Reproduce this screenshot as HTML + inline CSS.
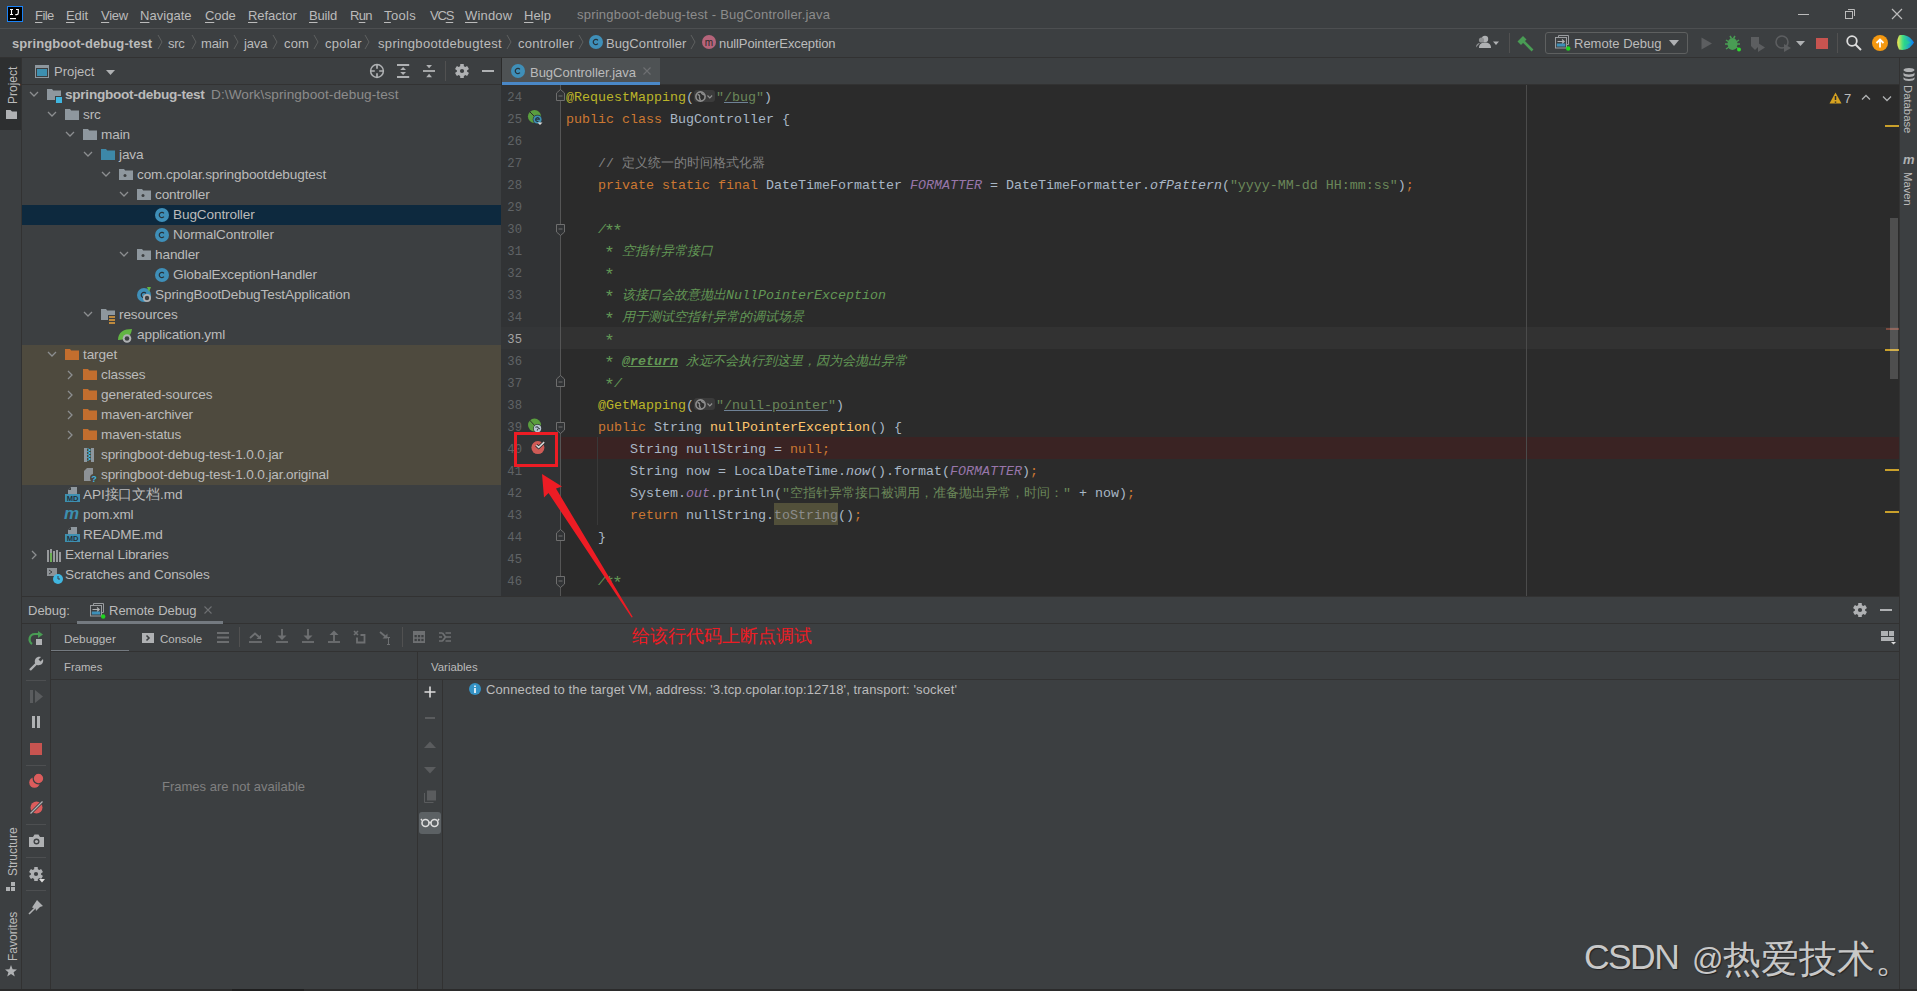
<!DOCTYPE html><html><head><meta charset="utf-8"><title>IntelliJ</title><style>
*{margin:0;padding:0;box-sizing:border-box}
html,body{width:1917px;height:991px;overflow:hidden;background:#3c3f41}
body{position:relative;font-family:"Liberation Sans",sans-serif;font-size:13px;color:#bbbbbb}
.t{position:absolute;white-space:pre;line-height:16px;transform:translateY(-7px)}
.c{position:absolute;white-space:pre;font-family:"Liberation Mono",monospace;font-size:13.333px;line-height:22px;color:#a9b7c6}
.k{color:#cc7832}.an{color:#bbb529}.s{color:#6a8759}.cm{color:#808080}.dc{color:#629755;font-style:italic}
.sf{color:#9876aa;font-style:italic}.it{font-style:italic}.md{color:#ffc66d}
.zh{font-size:13px}
.ast{display:inline-block;width:8px;text-align:center;font-style:normal;transform:translate(-0.5px,2.5px) scale(1.3)}
.ln{position:absolute;left:502px;width:20px;text-align:right;font-family:"Liberation Mono",monospace;font-size:12.2px;line-height:22px;color:#606366}
svg{position:absolute;overflow:visible}
</style></head><body><div style="position:absolute;left:0px;top:0px;width:1917px;height:28px;background:#3c3f41"></div><div style="position:absolute;left:0px;top:28px;width:1917px;height:1px;background:#4d4f51"></div><svg style="left:7px;top:6px" width="16" height="16"><rect x="0.5" y="0.5" width="15" height="15" fill="#000" stroke="#1a82f7"/><path d="M3 3.5h3M4.5 3.5v5M3 8.5h3" stroke="#fff" stroke-width="1.1"/><path d="M9 3.5h2.3v3.3c0 1.3-0.6 1.9-1.7 1.9H8.3" fill="none" stroke="#fff" stroke-width="1.2"/><rect x="3" y="12" width="6" height="1.2" fill="#fff"/></svg><div class="t" style="left:35px;top:15px;color:#bbbbbb;letter-spacing:-0.537px;"><span style="text-decoration:underline;text-underline-offset:2px">F</span>ile</div><div class="t" style="left:66px;top:15px;color:#bbbbbb;letter-spacing:-0.100px;"><span style="text-decoration:underline;text-underline-offset:2px">E</span>dit</div><div class="t" style="left:101px;top:15px;color:#bbbbbb;letter-spacing:-0.261px;"><span style="text-decoration:underline;text-underline-offset:2px">V</span>iew</div><div class="t" style="left:140px;top:15px;color:#bbbbbb;letter-spacing:0.036px;"><span style="text-decoration:underline;text-underline-offset:2px">N</span>avigate</div><div class="t" style="left:205px;top:15px;color:#bbbbbb;letter-spacing:-0.095px;"><span style="text-decoration:underline;text-underline-offset:2px">C</span>ode</div><div class="t" style="left:248px;top:15px;color:#bbbbbb;letter-spacing:-0.041px;"><span style="text-decoration:underline;text-underline-offset:2px">R</span>efactor</div><div class="t" style="left:309px;top:15px;color:#bbbbbb;letter-spacing:-0.142px;"><span style="text-decoration:underline;text-underline-offset:2px">B</span>uild</div><div class="t" style="left:350px;top:15px;color:#bbbbbb;letter-spacing:-0.650px;">R<span style="text-decoration:underline;text-underline-offset:2px">u</span>n</div><div class="t" style="left:384px;top:15px;color:#bbbbbb;letter-spacing:0.370px;"><span style="text-decoration:underline;text-underline-offset:2px">T</span>ools</div><div class="t" style="left:430px;top:15px;color:#bbbbbb;letter-spacing:-1.177px;">VC<span style="text-decoration:underline;text-underline-offset:2px">S</span></div><div class="t" style="left:465px;top:15px;color:#bbbbbb;letter-spacing:0.160px;"><span style="text-decoration:underline;text-underline-offset:2px">W</span>indow</div><div class="t" style="left:524px;top:15px;color:#bbbbbb;letter-spacing:0.041px;"><span style="text-decoration:underline;text-underline-offset:2px">H</span>elp</div><div class="t" style="left:577px;top:14px;color:#8c8c8c;letter-spacing:0.213px;">springboot-debug-test - BugController.java</div><div style="position:absolute;left:1798px;top:14px;width:11px;height:1px;background:#bbb"></div><svg style="left:1845px;top:8px" width="12" height="12"><rect x="0.5" y="3.5" width="7" height="7" fill="none" stroke="#bbb"/><path d="M3 1.5h6.5V8" fill="none" stroke="#bbb"/></svg><svg style="left:1891px;top:8px" width="12" height="12"><path d="M1 1L11 11M11 1L1 11" stroke="#bbb" stroke-width="1.2"/></svg><div style="position:absolute;left:0px;top:29px;width:1917px;height:28px;background:#3c3f41"></div><div style="position:absolute;left:0px;top:57px;width:1917px;height:1px;background:#323232"></div><div class="t" style="left:12px;top:43px;font-weight:bold;letter-spacing:0.074px;">springboot-debug-test</div><div class="t" style="left:168px;top:43px;letter-spacing:-0.243px;">src</div><div class="t" style="left:201px;top:43px;letter-spacing:-0.170px;">main</div><div class="t" style="left:244px;top:43px;letter-spacing:-0.162px;">java</div><div class="t" style="left:284px;top:43px;letter-spacing:0.147px;">com</div><div class="t" style="left:325px;top:43px;letter-spacing:0.249px;">cpolar</div><div class="t" style="left:378px;top:43px;letter-spacing:0.325px;">springbootdebugtest</div><div class="t" style="left:518px;top:43px;letter-spacing:0.253px;">controller</div><svg style="left:157px;top:34px" width="6" height="16"><path d="M1 1L5 8L1 15" fill="none" stroke="#5e6060" stroke-width="1"/></svg><svg style="left:191px;top:34px" width="6" height="16"><path d="M1 1L5 8L1 15" fill="none" stroke="#5e6060" stroke-width="1"/></svg><svg style="left:233px;top:34px" width="6" height="16"><path d="M1 1L5 8L1 15" fill="none" stroke="#5e6060" stroke-width="1"/></svg><svg style="left:272px;top:34px" width="6" height="16"><path d="M1 1L5 8L1 15" fill="none" stroke="#5e6060" stroke-width="1"/></svg><svg style="left:313px;top:34px" width="6" height="16"><path d="M1 1L5 8L1 15" fill="none" stroke="#5e6060" stroke-width="1"/></svg><svg style="left:364px;top:34px" width="6" height="16"><path d="M1 1L5 8L1 15" fill="none" stroke="#5e6060" stroke-width="1"/></svg><svg style="left:506px;top:34px" width="6" height="16"><path d="M1 1L5 8L1 15" fill="none" stroke="#5e6060" stroke-width="1"/></svg><svg style="left:578px;top:34px" width="6" height="16"><path d="M1 1L5 8L1 15" fill="none" stroke="#5e6060" stroke-width="1"/></svg><svg style="left:690px;top:34px" width="6" height="16"><path d="M1 1L5 8L1 15" fill="none" stroke="#5e6060" stroke-width="1"/></svg><svg style="left:588.5px;top:35px" width="14" height="14"><circle cx="7" cy="7" r="7" fill="#3f8fb8"/><path d="M8.9 5.4A2.6 2.6 0 1 0 8.9 8.6" fill="none" stroke="#26323a" stroke-width="1.2"/></svg><div class="t" style="left:606px;top:43px;letter-spacing:0.078px;">BugController</div><svg style="left:701.5px;top:35px" width="14" height="14"><circle cx="7" cy="7" r="7" fill="#b5647a"/><text x="7" y="10.5" text-anchor="middle" font-family="Liberation Sans" font-size="10" fill="#2b2b2b">m</text></svg><div class="t" style="left:719px;top:43px;letter-spacing:-0.101px;">nullPointerException</div><svg style="left:1476px;top:35px" width="24" height="14"><circle cx="9" cy="4" r="3.2" fill="#afb1b3"/><path d="M3 13c0-4 2.5-5.5 6-5.5s6 1.5 6 5.5z" fill="#afb1b3"/><circle cx="5.5" cy="5" r="2.6" fill="#8f9193"/><path d="M0 12.5c0-3 1.5-4.5 4-4.5" fill="#8f9193"/><path d="M17 6.5h6l-3 3.5z" fill="#afb1b3"/></svg><div style="position:absolute;left:1509px;top:33px;width:1px;height:20px;background:#515151"></div><svg style="left:1516px;top:35px" width="19" height="17"><path d="M1.5 6.5L7 1L10.5 4.5L5 10z" fill="#499c54"/><path d="M7.5 6.5L16.5 15.5" stroke="#499c54" stroke-width="2.6"/></svg><div style="position:absolute;left:1545px;top:32px;width:143px;height:22px;border:1px solid #5e6060;border-radius:3px;background:#3c3f41"></div><svg style="left:1555px;top:35px" width="17" height="17"><path d="M3.5 2.5V0.5h10v9h-2" fill="none" stroke="#9a9da0"/><rect x="0.5" y="2.5" width="11" height="10.5" fill="#3c3f41" stroke="#9a9da0"/><path d="M2.5 6.5h6.5M7 4.5l2.2 2-2.2 2" fill="none" stroke="#afb1b3" stroke-width="1.1"/><rect x="1.8" y="8.5" width="8.5" height="3" fill="#3d8fb8"/><circle cx="13.2" cy="13.5" r="2.2" fill="#1fd31f"/></svg><div class="t" style="left:1574px;top:43px;color:#bbbbbb">Remote Debug</div><svg style="left:1669px;top:40px" width="10" height="6"><path d="M0 0h10L5 6z" fill="#afb1b3"/></svg><svg style="left:1701px;top:37px" width="12" height="13"><path d="M0.5 0.5L11 6.5L0.5 12.5z" fill="#5c5e60"/></svg><svg style="left:1725px;top:35px" width="17" height="17"><ellipse cx="7.5" cy="9" rx="5" ry="6" fill="#499c54"/><path d="M1 5l3 2M14 5l-3 2M0 9h3M12 9h3M1 14l3-2M14 14l-3-2M5 1l1.5 2.5M10 1l-1.5 2.5" stroke="#499c54" stroke-width="1.5"/><circle cx="14" cy="14.5" r="2" fill="#2fd92f"/></svg><svg style="left:1750px;top:35px" width="17" height="17"><path d="M1 2h8v9l-4 4-4-4z" fill="#5c5e60"/><path d="M8 8l7 4.5-7 4.5z" fill="#5c5e60"/></svg><svg style="left:1775px;top:35px" width="17" height="17"><circle cx="7" cy="7" r="6" fill="none" stroke="#5c5e60" stroke-width="1.6"/><path d="M9 9l7 4-7 4z" fill="#5c5e60"/></svg><svg style="left:1796px;top:41px" width="9" height="5"><path d="M0 0h9L4.5 5z" fill="#afb1b3"/></svg><div style="position:absolute;left:1816px;top:38px;width:12px;height:11px;background:#c75450"></div><div style="position:absolute;left:1837px;top:33px;width:1px;height:20px;background:#515151"></div><svg style="left:1846px;top:35px" width="16" height="16"><circle cx="6" cy="6" r="4.8" fill="none" stroke="#dddddd" stroke-width="1.8"/><path d="M9.5 9.5L15 15" stroke="#dddddd" stroke-width="2"/></svg><svg style="left:1872px;top:35px" width="17" height="17"><circle cx="8" cy="8" r="8" fill="#f49810"/><path d="M8 12.5V5M4.5 8L8 4.5L11.5 8" fill="none" stroke="#fff" stroke-width="1.8"/></svg><svg style="left:1897px;top:34px" width="18" height="18"><defs><linearGradient id="tb" x1="0" y1="0" x2="1" y2="0"><stop offset="0" stop-color="#fce94f"/><stop offset="0.35" stop-color="#3ddc84"/><stop offset="1" stop-color="#087cfa"/></linearGradient></defs><path d="M2 1.5C7 0 13 2 17 8.5C13 15 7 17 2 15.5C-0.5 11 -0.5 6 2 1.5z" fill="url(#tb)"/><path d="M7 5L14 8.5L7 12z" fill="#21d789" opacity="0.6"/></svg><div style="position:absolute;left:0px;top:58px;width:21px;height:933px;background:#3c3f41"></div><div style="position:absolute;left:21px;top:58px;width:1px;height:933px;background:#323232"></div><div style="position:absolute;left:0px;top:58px;width:21px;height:72px;background:#2d2f30"></div><div style="position:absolute;left:4.5px;top:104px;width:70px;height:16px;transform-origin:0 0;transform:rotate(-90deg);font-size:12px;color:#bbb;line-height:16px;white-space:pre">Project</div><svg style="left:6px;top:110px" width="11" height="9"><path d="M0 0h4.5l1.5 1.5H11V9H0z" fill="#afb1b3"/></svg><div style="position:absolute;left:4.5px;top:876px;width:70px;height:16px;transform-origin:0 0;transform:rotate(-90deg);font-size:12px;color:#bbb;line-height:16px;white-space:pre">Structure</div><svg style="left:6px;top:882px" width="10" height="10"><rect x="5" y="0" width="4" height="4" fill="#afb1b3"/><rect x="0" y="5" width="4" height="4" fill="#afb1b3"/><rect x="5" y="5" width="4" height="4" fill="#afb1b3"/></svg><div style="position:absolute;left:4.5px;top:961px;width:70px;height:16px;transform-origin:0 0;transform:rotate(-90deg);font-size:12px;color:#bbb;line-height:16px;white-space:pre">Favorites</div><svg style="left:5px;top:965px" width="12" height="12"><path d="M6 0L7.6 4.2L12 4.4L8.6 7.2L9.8 11.6L6 9.1L2.2 11.6L3.4 7.2L0 4.4L4.4 4.2z" fill="#afb1b3"/></svg><div style="position:absolute;left:1899px;top:58px;width:1px;height:933px;background:#323232"></div><div style="position:absolute;left:1900px;top:58px;width:17px;height:933px;background:#3c3f41"></div><svg style="left:1903px;top:68px" width="12" height="13"><ellipse cx="6" cy="2" rx="5.5" ry="2" fill="#afb1b3"/><path d="M0.5 4.5c0 2.5 11 2.5 11 0v2.5c0 2.5-11 2.5-11 0zM0.5 9c0 2.5 11 2.5 11 0v2c0 2.5-11 2.5-11 0z" fill="#afb1b3"/></svg><div style="position:absolute;left:1915.5px;top:85px;width:60px;height:16px;transform-origin:0 0;transform:rotate(90deg);font-size:11.3px;color:#bbb;line-height:16px;white-space:pre">Database</div><div style="position:absolute;left:1903px;top:153px;font-size:13px;font-style:italic;font-weight:bold;color:#afb1b3;line-height:13px">m</div><div style="position:absolute;left:1915.5px;top:172px;width:60px;height:16px;transform-origin:0 0;transform:rotate(90deg);font-size:11.3px;color:#bbb;line-height:16px;white-space:pre">Maven</div><div style="position:absolute;left:22px;top:58px;width:479px;height:26px;background:#3c3f41"></div><div style="position:absolute;left:22px;top:84px;width:479px;height:1px;background:#323232"></div><svg style="left:35px;top:65px" width="14" height="13"><rect x="0.5" y="0.5" width="13" height="12" fill="none" stroke="#8e979e"/><rect x="0" y="0" width="14" height="3" fill="#8e979e"/><rect x="2" y="4" width="10" height="7" fill="#3d8fb0"/></svg><div class="t" style="left:54px;top:71px;">Project</div><svg style="left:106px;top:70px" width="9" height="5"><path d="M0 0h9L4.5 5z" fill="#afb1b3"/></svg><svg style="left:369px;top:63px" width="16" height="16"><circle cx="8" cy="8" r="6.4" fill="none" stroke="#afb1b3" stroke-width="1.5"/><path d="M8 1.5v4.3M8 10.2v4.3M1.5 8h4.3M10.2 8h4.3" stroke="#afb1b3" stroke-width="1.7"/></svg><svg style="left:397px;top:64px" width="13" height="14"><path d="M0 1h12.2M0 13h12.2" stroke="#afb1b3" stroke-width="1.8"/><path d="M3.2 6L6.1 3.1L9 6zM3.2 8L6.1 10.9L9 8z" fill="#afb1b3"/></svg><svg style="left:423px;top:64px" width="13" height="14"><path d="M0 7h12" stroke="#afb1b3" stroke-width="1.8"/><path d="M3.2 1h5.8L6.1 4.2zM3.2 13.2h5.8L6.1 9.8z" fill="#afb1b3"/></svg><div style="position:absolute;left:445px;top:61px;width:1px;height:20px;background:#515151"></div><svg style="left:455px;top:64px" width="14" height="14"><circle cx="7.0" cy="7.0" r="5.18" fill="#afb1b3"/><rect x="5.18" y="0" width="3.64" height="4.20" rx="0.6" fill="#afb1b3" transform="rotate(0 7.0 7.0)"/><rect x="5.18" y="0" width="3.64" height="4.20" rx="0.6" fill="#afb1b3" transform="rotate(60 7.0 7.0)"/><rect x="5.18" y="0" width="3.64" height="4.20" rx="0.6" fill="#afb1b3" transform="rotate(120 7.0 7.0)"/><rect x="5.18" y="0" width="3.64" height="4.20" rx="0.6" fill="#afb1b3" transform="rotate(180 7.0 7.0)"/><rect x="5.18" y="0" width="3.64" height="4.20" rx="0.6" fill="#afb1b3" transform="rotate(240 7.0 7.0)"/><rect x="5.18" y="0" width="3.64" height="4.20" rx="0.6" fill="#afb1b3" transform="rotate(300 7.0 7.0)"/><circle cx="7.0" cy="7.0" r="2.10" fill="#3c3f41"/></svg><div style="position:absolute;left:482px;top:70px;width:12px;height:2px;background:#afb1b3"></div><div style="position:absolute;left:501px;top:58px;width:1px;height:538px;background:#2b2b2b"></div><div style="position:absolute;left:22px;top:205px;width:479px;height:20px;background:#0d293e"></div><div style="position:absolute;left:22px;top:345px;width:479px;height:140px;background:#4e4a3e"></div><svg style="left:29px;top:91px" width="10" height="6"><path d="M1 1L5 5L9 1" fill="none" stroke="#8c8e90" stroke-width="1.3"/></svg><svg style="left:47px;top:89px" width="14" height="11"><path d="M0 0h5l1.2 1.6H14V11H0z" fill="#8e979e"/></svg><div style="position:absolute;left:56px;top:97px;width:6px;height:6px;background:#40b6e0;box-shadow:0 0 0 1px #3c3f41"></div><div class="t" style="left:65px;top:94px;color:#bbbbbb;font-weight:bold;font-size:13.6px;letter-spacing:-0.260px;">springboot-debug-test</div><div class="t" style="left:211px;top:94px;color:#8c8c8c;font-size:13.6px;letter-spacing:0.095px;">D:\Work\springboot-debug-test</div><svg style="left:47px;top:111px" width="10" height="6"><path d="M1 1L5 5L9 1" fill="none" stroke="#8c8e90" stroke-width="1.3"/></svg><svg style="left:65px;top:109px" width="14" height="11"><path d="M0 0h5l1.2 1.6H14V11H0z" fill="#8e979e"/></svg><div class="t" style="left:83px;top:114px;color:#bbbbbb;font-size:13.6px;letter-spacing:-0.12px">src</div><svg style="left:65px;top:131px" width="10" height="6"><path d="M1 1L5 5L9 1" fill="none" stroke="#8c8e90" stroke-width="1.3"/></svg><svg style="left:83px;top:129px" width="14" height="11"><path d="M0 0h5l1.2 1.6H14V11H0z" fill="#8e979e"/></svg><div class="t" style="left:101px;top:134px;color:#bbbbbb;font-size:13.6px;letter-spacing:-0.12px">main</div><svg style="left:83px;top:151px" width="10" height="6"><path d="M1 1L5 5L9 1" fill="none" stroke="#8c8e90" stroke-width="1.3"/></svg><svg style="left:101px;top:149px" width="14" height="11"><path d="M0 0h5l1.2 1.6H14V11H0z" fill="#3d88a8"/></svg><div class="t" style="left:119px;top:154px;color:#bbbbbb;font-size:13.6px;letter-spacing:-0.12px">java</div><svg style="left:101px;top:171px" width="10" height="6"><path d="M1 1L5 5L9 1" fill="none" stroke="#8c8e90" stroke-width="1.3"/></svg><svg style="left:119px;top:169px" width="14" height="11"><path d="M0 0h5l1.2 1.6H14V11H0z" fill="#8e979e"/><circle cx="6" cy="6.5" r="1.5" fill="#3c3f41"/></svg><div class="t" style="left:137px;top:174px;color:#bbbbbb;font-size:13.6px;letter-spacing:-0.12px">com.cpolar.springbootdebugtest</div><svg style="left:119px;top:191px" width="10" height="6"><path d="M1 1L5 5L9 1" fill="none" stroke="#8c8e90" stroke-width="1.3"/></svg><svg style="left:137px;top:189px" width="14" height="11"><path d="M0 0h5l1.2 1.6H14V11H0z" fill="#8e979e"/><circle cx="6" cy="6.5" r="1.5" fill="#3c3f41"/></svg><div class="t" style="left:155px;top:194px;color:#bbbbbb;font-size:13.6px;letter-spacing:-0.12px">controller</div><svg style="left:154.5px;top:208px" width="14" height="14"><circle cx="7" cy="7" r="7" fill="#3f8fb8"/><path d="M8.9 5.4A2.6 2.6 0 1 0 8.9 8.6" fill="none" stroke="#26323a" stroke-width="1.2"/></svg><div class="t" style="left:173px;top:214px;color:#bbbbbb;font-size:13.6px;letter-spacing:-0.12px">BugController</div><svg style="left:154.5px;top:228px" width="14" height="14"><circle cx="7" cy="7" r="7" fill="#3f8fb8"/><path d="M8.9 5.4A2.6 2.6 0 1 0 8.9 8.6" fill="none" stroke="#26323a" stroke-width="1.2"/></svg><div class="t" style="left:173px;top:234px;color:#bbbbbb;font-size:13.6px;letter-spacing:-0.12px">NormalController</div><svg style="left:119px;top:251px" width="10" height="6"><path d="M1 1L5 5L9 1" fill="none" stroke="#8c8e90" stroke-width="1.3"/></svg><svg style="left:137px;top:249px" width="14" height="11"><path d="M0 0h5l1.2 1.6H14V11H0z" fill="#8e979e"/><circle cx="6" cy="6.5" r="1.5" fill="#3c3f41"/></svg><div class="t" style="left:155px;top:254px;color:#bbbbbb;font-size:13.6px;letter-spacing:-0.12px">handler</div><svg style="left:154.5px;top:268px" width="14" height="14"><circle cx="7" cy="7" r="7" fill="#3f8fb8"/><path d="M8.9 5.4A2.6 2.6 0 1 0 8.9 8.6" fill="none" stroke="#26323a" stroke-width="1.2"/></svg><div class="t" style="left:173px;top:274px;color:#bbbbbb;font-size:13.6px;letter-spacing:-0.12px">GlobalExceptionHandler</div><svg style="left:136.5px;top:288px" width="14" height="14"><circle cx="7" cy="7" r="7" fill="#3f8fb8"/><path d="M8.9 5.4A2.6 2.6 0 1 0 8.9 8.6" fill="none" stroke="#26323a" stroke-width="1.2"/></svg><svg style="left:139px;top:287px" width="16" height="16"><path d="M8 0l4 0-2 5z" fill="#62b543"/><circle cx="8" cy="11" r="4" fill="#afb1b3"/><circle cx="8" cy="11" r="2.2" fill="#3c3f41"/></svg><div class="t" style="left:155px;top:294px;color:#bbbbbb;font-size:13.6px;letter-spacing:-0.12px">SpringBootDebugTestApplication</div><svg style="left:83px;top:311px" width="10" height="6"><path d="M1 1L5 5L9 1" fill="none" stroke="#8c8e90" stroke-width="1.3"/></svg><svg style="left:101px;top:309px" width="14" height="11"><path d="M0 0h5l1.2 1.6H14V11H0z" fill="#8e979e"/></svg><svg style="left:109px;top:316px" width="7" height="8"><rect x="-1" y="-1" width="9" height="10" fill="#3c3f41"/><path d="M0 1h6M0 4h6M0 7h6" stroke="#e8a33e" stroke-width="1.5"/></svg><div class="t" style="left:119px;top:314px;color:#bbbbbb;font-size:13.6px;letter-spacing:-0.12px">resources</div><svg style="left:117px;top:328px" width="16" height="15"><path d="M1 12C1 4 7 1 15 1C14 8 10 12 1 12z" fill="#62b543"/><circle cx="10" cy="10.5" r="4.3" fill="#afb1b3"/><circle cx="10" cy="10.5" r="2.3" fill="#3c3f41"/></svg><div class="t" style="left:137px;top:334px;color:#bbbbbb;font-size:13.6px;letter-spacing:-0.12px">application.yml</div><svg style="left:47px;top:351px" width="10" height="6"><path d="M1 1L5 5L9 1" fill="none" stroke="#8c8e90" stroke-width="1.3"/></svg><svg style="left:65px;top:349px" width="14" height="11"><path d="M0 0h5l1.2 1.6H14V11H0z" fill="#c36e2e"/></svg><div class="t" style="left:83px;top:354px;color:#bbbbbb;font-size:13.6px;letter-spacing:-0.12px">target</div><svg style="left:67px;top:370px" width="6" height="10"><path d="M1 1L5 5L1 9" fill="none" stroke="#8c8e90" stroke-width="1.3"/></svg><svg style="left:83px;top:369px" width="14" height="11"><path d="M0 0h5l1.2 1.6H14V11H0z" fill="#c36e2e"/></svg><div class="t" style="left:101px;top:374px;color:#bbbbbb;font-size:13.6px;letter-spacing:-0.12px">classes</div><svg style="left:67px;top:390px" width="6" height="10"><path d="M1 1L5 5L1 9" fill="none" stroke="#8c8e90" stroke-width="1.3"/></svg><svg style="left:83px;top:389px" width="14" height="11"><path d="M0 0h5l1.2 1.6H14V11H0z" fill="#c36e2e"/></svg><div class="t" style="left:101px;top:394px;color:#bbbbbb;font-size:13.6px;letter-spacing:-0.12px">generated-sources</div><svg style="left:67px;top:410px" width="6" height="10"><path d="M1 1L5 5L1 9" fill="none" stroke="#8c8e90" stroke-width="1.3"/></svg><svg style="left:83px;top:409px" width="14" height="11"><path d="M0 0h5l1.2 1.6H14V11H0z" fill="#c36e2e"/></svg><div class="t" style="left:101px;top:414px;color:#bbbbbb;font-size:13.6px;letter-spacing:-0.12px">maven-archiver</div><svg style="left:67px;top:430px" width="6" height="10"><path d="M1 1L5 5L1 9" fill="none" stroke="#8c8e90" stroke-width="1.3"/></svg><svg style="left:83px;top:429px" width="14" height="11"><path d="M0 0h5l1.2 1.6H14V11H0z" fill="#c36e2e"/></svg><div class="t" style="left:101px;top:434px;color:#bbbbbb;font-size:13.6px;letter-spacing:-0.12px">maven-status</div><svg style="left:84px;top:448px" width="11" height="14"><rect x="0" y="0" width="10" height="14" fill="#8e979e"/><rect x="3" y="0" width="4" height="14" fill="#4e4a3e"/><path d="M3.5 0.5l3 1.5-3 1.5 3 1.5-3 1.5 3 1.5-3 1.5 3 1.5-3 1.5" fill="none" stroke="#40b6e0" stroke-width="1"/></svg><div class="t" style="left:101px;top:454px;color:#bbbbbb;font-size:13.6px;letter-spacing:-0.12px">springboot-debug-test-1.0.0.jar</div><svg style="left:84px;top:468px" width="14" height="14"><path d="M0 3L3 0H9V13H0z" fill="#8d9296"/><circle cx="10" cy="10" r="4" fill="#4b473c"/><text x="10" y="14" text-anchor="middle" font-size="9" font-weight="bold" fill="#40b6e0" font-family="Liberation Sans">?</text></svg><div class="t" style="left:101px;top:474px;color:#bbbbbb;font-size:13.6px;letter-spacing:-0.12px">springboot-debug-test-1.0.0.jar.original</div><svg style="left:65px;top:487px" width="15" height="15"><path d="M6 0H12V7H3V3z" fill="#8e979e"/><path d="M3 3L6 0V3z" fill="#3c3f41"/><rect x="0" y="7" width="15" height="8" fill="#3d8fb0"/><text x="7.5" y="14" text-anchor="middle" font-size="7.5" font-weight="bold" fill="#26323a" font-family="Liberation Sans">MD</text></svg><div class="t" style="left:83px;top:494px;color:#bbbbbb;font-size:13.6px;letter-spacing:-0.12px">API接口文档.md</div><div style="position:absolute;left:64px;top:507px;font-size:17px;font-style:italic;font-weight:bold;color:#3d8fb0;line-height:14px;letter-spacing:-1px">m</div><div class="t" style="left:83px;top:514px;color:#bbbbbb;font-size:13.6px;letter-spacing:-0.12px">pom.xml</div><svg style="left:65px;top:527px" width="15" height="15"><path d="M6 0H12V7H3V3z" fill="#8e979e"/><path d="M3 3L6 0V3z" fill="#3c3f41"/><rect x="0" y="7" width="15" height="8" fill="#3d8fb0"/><text x="7.5" y="14" text-anchor="middle" font-size="7.5" font-weight="bold" fill="#26323a" font-family="Liberation Sans">MD</text></svg><div class="t" style="left:83px;top:534px;color:#bbbbbb;font-size:13.6px;letter-spacing:-0.12px">README.md</div><svg style="left:31px;top:550px" width="6" height="10"><path d="M1 1L5 5L1 9" fill="none" stroke="#8c8e90" stroke-width="1.3"/></svg><svg style="left:47px;top:549px" width="14" height="13"><path d="M1 1v12M4 0v13M7 2v11M10 1v12M13 3v10" stroke="#afb1b3" stroke-width="1.6"/><path d="M4 4v9" stroke="#62b543" stroke-width="1.6"/></svg><div class="t" style="left:65px;top:554px;color:#bbbbbb;font-size:13.6px;letter-spacing:-0.12px">External Libraries</div><svg style="left:47px;top:568px" width="16" height="16"><path d="M0 0h10v8H0z" fill="#8d9296"/><path d="M2 2l3 2-3 2" fill="none" stroke="#3c3f41"/><circle cx="11" cy="11" r="5" fill="#40b6e0"/><path d="M11 8v3h2" fill="none" stroke="#3c3f41"/></svg><div class="t" style="left:65px;top:574px;color:#bbbbbb;font-size:13.6px;letter-spacing:-0.12px">Scratches and Consoles</div><div style="position:absolute;left:22px;top:596px;width:479px;height:1px;background:#323232"></div><div style="position:absolute;left:502px;top:58px;width:1397px;height:26px;background:#3c3f41"></div><div style="position:absolute;left:502px;top:58px;width:158px;height:24px;background:#4e5254"></div><div style="position:absolute;left:502px;top:84px;width:1397px;height:1px;background:#323232"></div><div style="position:absolute;left:502px;top:82px;width:158px;height:3px;background:#4a88c7"></div><svg style="left:510.5px;top:64px" width="14" height="14"><circle cx="7" cy="7" r="7" fill="#3f8fb8"/><path d="M8.9 5.4A2.6 2.6 0 1 0 8.9 8.6" fill="none" stroke="#26323a" stroke-width="1.2"/></svg><div class="t" style="left:530px;top:72px;color:#bbbbbb;letter-spacing:-0.013px;">BugController.java</div><svg style="left:643px;top:67px" width="8" height="8"><path d="M0.5 0.5L7.5 7.5M7.5 0.5L0.5 7.5" stroke="#6e7072" stroke-width="1.1"/></svg><div style="position:absolute;left:502px;top:85px;width:1397px;height:512px;background:#2b2b2b"></div><div style="position:absolute;left:501px;top:85px;width:59px;height:512px;background:#313335"></div><div style="position:absolute;left:561px;top:327px;width:1338px;height:22px;background:#323232"></div><div style="position:absolute;left:501px;top:327px;width:59px;height:22px;background:#343638"></div><div style="position:absolute;left:561px;top:437px;width:1338px;height:22px;background:#3a2323"></div><div style="position:absolute;left:1526px;top:85px;width:1px;height:512px;background:#4b4b4b"></div><div style="position:absolute;left:560px;top:85px;width:1px;height:512px;background:#555555"></div><svg style="left:556px;top:89px" width="10" height="12"><path d="M0.5 11.5V4L4.5 0.5L8.5 4V11.5z" fill="#313335" stroke="#6e6e6e"/><path d="M2.5 7h4" stroke="#6e6e6e"/></svg><svg style="left:556px;top:224px" width="10" height="12"><path d="M0.5 0.5V8L4.5 11.5L8.5 8V0.5z" fill="#313335" stroke="#6e6e6e"/><path d="M2.5 5h4" stroke="#6e6e6e"/></svg><svg style="left:556px;top:375px" width="10" height="12"><path d="M0.5 11.5V4L4.5 0.5L8.5 4V11.5z" fill="#313335" stroke="#6e6e6e"/><path d="M2.5 7h4" stroke="#6e6e6e"/></svg><svg style="left:556px;top:422px" width="10" height="12"><path d="M0.5 0.5V8L4.5 11.5L8.5 8V0.5z" fill="#313335" stroke="#6e6e6e"/><path d="M2.5 5h4" stroke="#6e6e6e"/></svg><svg style="left:556px;top:529px" width="10" height="12"><path d="M0.5 11.5V4L4.5 0.5L8.5 4V11.5z" fill="#313335" stroke="#6e6e6e"/><path d="M2.5 7h4" stroke="#6e6e6e"/></svg><svg style="left:556px;top:576px" width="10" height="12"><path d="M0.5 0.5V8L4.5 11.5L8.5 8V0.5z" fill="#313335" stroke="#6e6e6e"/><path d="M2.5 5h4" stroke="#6e6e6e"/></svg><div class="ln" style="top:87px;color:#606366">24</div><div class="ln" style="top:109px;color:#606366">25</div><div class="ln" style="top:131px;color:#606366">26</div><div class="ln" style="top:153px;color:#606366">27</div><div class="ln" style="top:175px;color:#606366">28</div><div class="ln" style="top:197px;color:#606366">29</div><div class="ln" style="top:219px;color:#606366">30</div><div class="ln" style="top:241px;color:#606366">31</div><div class="ln" style="top:263px;color:#606366">32</div><div class="ln" style="top:285px;color:#606366">33</div><div class="ln" style="top:307px;color:#606366">34</div><div class="ln" style="top:329px;color:#a4a3a3">35</div><div class="ln" style="top:351px;color:#606366">36</div><div class="ln" style="top:373px;color:#606366">37</div><div class="ln" style="top:395px;color:#606366">38</div><div class="ln" style="top:417px;color:#606366">39</div><div class="ln" style="top:439px;color:#606366">40</div><div class="ln" style="top:461px;color:#606366">41</div><div class="ln" style="top:483px;color:#606366">42</div><div class="ln" style="top:505px;color:#606366">43</div><div class="ln" style="top:527px;color:#606366">44</div><div class="ln" style="top:549px;color:#606366">45</div><div class="ln" style="top:571px;color:#606366">46</div><div style="position:absolute;left:597px;top:437px;width:1px;height:88px;background:#393939"></div><div style="position:absolute;left:774px;top:503px;width:64px;height:22px;background:#52503a"></div><div class="c" style="left:566px;top:87px"><span class="an">@RequestMapping</span>(<span style="display:inline-block;width:22px;height:12px;vertical-align:-1px;position:relative"><span style="position:absolute;left:0.5px;top:0px;width:21px;height:12px;background:#3b3b3b;border-radius:3px"></span><svg style="left:1px;top:0.5px" width="20" height="12"><circle cx="5.5" cy="5.5" r="4.6" fill="#2e2e2e" stroke="#8f8f8f" stroke-width="1.6"/><path d="M2.5 3.5C4 3.5 5 4.5 4.5 6C4 7 5 8 5.5 9.5M6.5 1.5C6.5 3 8 3.5 9.5 4" fill="none" stroke="#8f8f8f" stroke-width="1.4"/><path d="M12.5 4.5l2.3 2.3 2.3-2.3" fill="none" stroke="#8f8f8f" stroke-width="1.2"/></svg></span><span class="s">"<u style="text-decoration-color:#6f8296">/bug</u>"</span>)</div><div class="c" style="left:566px;top:109px"><span class="k">public class </span>BugController {</div><div class="c" style="left:566px;top:153px">    <span class="cm">// <span class="zh">定义统一的时间格式化器</span></span></div><div class="c" style="left:566px;top:175px">    <span class="k">private static final </span>DateTimeFormatter <span class="sf">FORMATTER</span> = DateTimeFormatter.<span class="it">ofPattern</span>(<span class="s">"yyyy-MM-dd HH:mm:ss"</span>)<span class="k">;</span></div><div class="c" style="left:566px;top:219px">    <span class="dc">/<span class="ast">*</span><span class="ast">*</span></span></div><div class="c" style="left:566px;top:241px"><span class="dc">     <span class="ast">*</span> <span class="zh">空指针异常接口</span></span></div><div class="c" style="left:566px;top:263px"><span class="dc">     <span class="ast">*</span></span></div><div class="c" style="left:566px;top:285px"><span class="dc">     <span class="ast">*</span> <span class="zh">该接口会故意抛出</span>NullPointerException</span></div><div class="c" style="left:566px;top:307px"><span class="dc">     <span class="ast">*</span> <span class="zh">用于测试空指针异常的调试场景</span></span></div><div class="c" style="left:566px;top:329px"><span class="dc">     <span class="ast">*</span></span></div><div class="c" style="left:566px;top:351px"><span class="dc">     <span class="ast">*</span> <b><u>@return</u></b> <span class="zh">永远不会执行到这里，因为会抛出异常</span></span></div><div class="c" style="left:566px;top:373px"><span class="dc">     <span class="ast">*</span>/</span></div><div class="c" style="left:566px;top:395px">    <span class="an">@GetMapping</span>(<span style="display:inline-block;width:22px;height:12px;vertical-align:-1px;position:relative"><span style="position:absolute;left:0.5px;top:0px;width:21px;height:12px;background:#3b3b3b;border-radius:3px"></span><svg style="left:1px;top:0.5px" width="20" height="12"><circle cx="5.5" cy="5.5" r="4.6" fill="#2e2e2e" stroke="#8f8f8f" stroke-width="1.6"/><path d="M2.5 3.5C4 3.5 5 4.5 4.5 6C4 7 5 8 5.5 9.5M6.5 1.5C6.5 3 8 3.5 9.5 4" fill="none" stroke="#8f8f8f" stroke-width="1.4"/><path d="M12.5 4.5l2.3 2.3 2.3-2.3" fill="none" stroke="#8f8f8f" stroke-width="1.2"/></svg></span><span class="s">"<u style="text-decoration-color:#6f8296">/null-pointer</u>"</span>)</div><div class="c" style="left:566px;top:417px">    <span class="k">public </span>String <span class="md">nullPointerException</span>() {</div><div class="c" style="left:566px;top:439px">        String nullString = <span class="k">null;</span></div><div class="c" style="left:566px;top:461px">        String now = LocalDateTime.<span class="it">now</span>().format(<span class="sf">FORMATTER</span>)<span class="k">;</span></div><div class="c" style="left:566px;top:483px">        System.<span class="sf">out</span>.println(<span class="s">"<span class="zh">空指针异常接口被调用，准备抛出异常，时间：</span>"</span> + now)<span class="k">;</span></div><div class="c" style="left:566px;top:505px">        <span class="k">return </span>nullString.<span style="color:#8c8c8c">toString</span>()<span class="k">;</span></div><div class="c" style="left:566px;top:527px">    }</div><div class="c" style="left:566px;top:571px">    <span class="dc">/<span class="ast">*</span><span class="ast">*</span></span></div><svg style="left:527px;top:109px" width="17" height="17"><ellipse cx="7.5" cy="7.5" rx="6.6" ry="6.4" fill="#5a9e3e"/><path d="M2.5 2.5L8.5 8.5" stroke="#2b2b2b" stroke-width="1"/><circle cx="10.5" cy="10.5" r="4.8" fill="#313335"/><circle cx="10.5" cy="10.5" r="4.1" fill="#3d8fb0"/><path d="M8.6 10.3h3.8A1.9 1.9 0 1 0 11.4 12.2" fill="none" stroke="#26323a" stroke-width="1.1"/><path d="M10.5 13.5h5l-2.5 2.5z" fill="#dddddd"/></svg><svg style="left:527px;top:418px" width="16" height="16"><ellipse cx="7.5" cy="7" rx="6.5" ry="6.5" fill="#5a9e3e"/><path d="M2.5 2L9 9" stroke="#2b2b2b" stroke-width="0.9"/><circle cx="10.5" cy="10.5" r="4.4" fill="#313335"/><circle cx="10.5" cy="10.5" r="3.7" fill="#b8c6d2"/><path d="M8.5 9.5c1-1 2-1 2.5 0s1 1.5 2 1M10 12.5l1-1.5" fill="none" stroke="#3a3f44" stroke-width="1.1"/></svg><svg style="left:530px;top:439px" width="17" height="16"><circle cx="7.9" cy="8.6" r="6.5" fill="#cf5b56"/><path d="M6.3 6.2l2.4 2.2 5.5-5.3" fill="none" stroke="#2b2b2b" stroke-width="3.2"/><path d="M6.3 6.2l2.4 2.2 5.5-5.3" fill="none" stroke="#d8d8d8" stroke-width="1.5"/></svg><svg style="left:1829px;top:92px" width="13" height="12"><path d="M6.5 0.5L12.5 11.5H0.5z" fill="#d6a220"/><path d="M6.5 4v4M6.5 9.5v1.2" stroke="#2b2b2b" stroke-width="1.5"/></svg><div class="t" style="left:1844px;top:98px;color:#bbbbbb">7</div><svg style="left:1861px;top:94px" width="10" height="6"><path d="M1 5.5L5 1.5L9 5.5" fill="none" stroke="#afb1b3" stroke-width="1.3"/></svg><svg style="left:1882px;top:96px" width="10" height="6"><path d="M1 0.5L5 4.5L9 0.5" fill="none" stroke="#afb1b3" stroke-width="1.3"/></svg><div style="position:absolute;left:1885px;top:125px;width:14px;height:2px;background:#c9a02b"></div><div style="position:absolute;left:1885px;top:349px;width:14px;height:2px;background:#c9a02b"></div><div style="position:absolute;left:1885px;top:469px;width:14px;height:2px;background:#c9a02b"></div><div style="position:absolute;left:1885px;top:511px;width:14px;height:2px;background:#c9a02b"></div><div style="position:absolute;left:1886px;top:328px;width:13px;height:2px;background:#7a4a3f"></div><div style="position:absolute;left:1890px;top:218px;width:8px;height:161px;background:rgba(255,255,255,0.17)"></div><div style="position:absolute;left:22px;top:596px;width:1877px;height:1px;background:#323232"></div><div style="position:absolute;left:22px;top:597px;width:1877px;height:394px;background:#3c3f41"></div><div class="t" style="left:28px;top:610px;color:#bbbbbb">Debug:</div><svg style="left:90px;top:603px" width="17" height="17"><path d="M3.5 2.5V0.5h10v9h-2" fill="none" stroke="#9a9da0"/><rect x="0.5" y="2.5" width="11" height="10.5" fill="#3c3f41" stroke="#9a9da0"/><path d="M2.5 6.5h6.5M7 4.5l2.2 2-2.2 2" fill="none" stroke="#afb1b3" stroke-width="1.1"/><rect x="1.8" y="8.5" width="8.5" height="3" fill="#3d8fb8"/><circle cx="13.2" cy="13.5" r="2.2" fill="#1fd31f"/></svg><div class="t" style="left:109px;top:610px;color:#bbbbbb">Remote Debug</div><svg style="left:204px;top:606px" width="8" height="8"><path d="M0.5 0.5L7.5 7.5M7.5 0.5L0.5 7.5" stroke="#6e7072" stroke-width="1.1"/></svg><div style="position:absolute;left:22px;top:623px;width:1877px;height:1px;background:#323232"></div><div style="position:absolute;left:77px;top:621px;width:146px;height:3px;background:#747a80"></div><svg style="left:1853px;top:603px" width="14" height="14"><circle cx="7.0" cy="7.0" r="5.18" fill="#afb1b3"/><rect x="5.18" y="0" width="3.64" height="4.20" rx="0.6" fill="#afb1b3" transform="rotate(0 7.0 7.0)"/><rect x="5.18" y="0" width="3.64" height="4.20" rx="0.6" fill="#afb1b3" transform="rotate(60 7.0 7.0)"/><rect x="5.18" y="0" width="3.64" height="4.20" rx="0.6" fill="#afb1b3" transform="rotate(120 7.0 7.0)"/><rect x="5.18" y="0" width="3.64" height="4.20" rx="0.6" fill="#afb1b3" transform="rotate(180 7.0 7.0)"/><rect x="5.18" y="0" width="3.64" height="4.20" rx="0.6" fill="#afb1b3" transform="rotate(240 7.0 7.0)"/><rect x="5.18" y="0" width="3.64" height="4.20" rx="0.6" fill="#afb1b3" transform="rotate(300 7.0 7.0)"/><circle cx="7.0" cy="7.0" r="2.10" fill="#3c3f41"/></svg><div style="position:absolute;left:1880px;top:609px;width:12px;height:2px;background:#afb1b3"></div><div style="position:absolute;left:50px;top:624px;width:1px;height:365px;background:#323232"></div><div class="t" style="left:64px;top:638px;color:#bbbbbb;font-size:11.8px">Debugger</div><div style="position:absolute;left:51px;top:650px;width:78px;height:2px;background:#747a80"></div><svg style="left:142px;top:633px" width="12" height="10"><rect width="12" height="10" fill="#afb1b3"/><path d="M4.5 2.5l2.5 2.5-2.5 2.5" fill="none" stroke="#3c3f41" stroke-width="1.6"/></svg><div class="t" style="left:160px;top:638px;color:#bbbbbb;font-size:11.5px">Console</div><svg style="left:217px;top:632px" width="12" height="11"><path d="M0 1h12M0 5.5h12M0 10h12" stroke="#6c6e70" stroke-width="2"/></svg><div style="position:absolute;left:239px;top:627px;width:1px;height:20px;background:#515151"></div><svg style="left:249px;top:630px" width="14" height="14"><path d="M1 8L6 3.5L10 7" fill="none" stroke="#6e7072" stroke-width="1.8"/><path d="M7.5 9h4.5V4.5z" fill="#6e7072"/><path d="M0 12h13" stroke="#6e7072" stroke-width="1.8"/></svg><svg style="left:276px;top:629px" width="13" height="15"><path d="M6 0v7" stroke="#6e7072" stroke-width="1.8"/><path d="M1.5 6.5h9L6 11z" fill="#6e7072"/><path d="M0 13h12" stroke="#6e7072" stroke-width="1.8"/></svg><svg style="left:302px;top:629px" width="13" height="15"><path d="M6 0v7" stroke="#6e7072" stroke-width="1.8"/><path d="M1.5 6.5h9L6 11z" fill="#6e7072"/><path d="M0 13h12" stroke="#6e7072" stroke-width="1.8"/></svg><svg style="left:328px;top:629px" width="13" height="15"><path d="M6 5v7" stroke="#6e7072" stroke-width="1.8"/><path d="M1.5 6h9L6 1.5z" fill="#6e7072"/><path d="M0 13h12" stroke="#6e7072" stroke-width="1.8"/></svg><svg style="left:353px;top:630px" width="14" height="14"><path d="M1 1l4 4M5 1l-4 4" stroke="#6e7072" stroke-width="1.6"/><path d="M4 7.5v5h7.5v-7.5h-4" fill="none" stroke="#6e7072" stroke-width="1.8"/></svg><svg style="left:379px;top:631px" width="15" height="15"><path d="M1 1l6 5" stroke="#6e7072" stroke-width="1.8"/><path d="M3.5 7.5h5v-5z" fill="#6e7072"/><path d="M9.5 6.5v7M8 6.5h3M8 13.5h3" stroke="#6e7072" stroke-width="1"/></svg><div style="position:absolute;left:402px;top:627px;width:1px;height:20px;background:#515151"></div><svg style="left:413px;top:631px" width="12" height="12"><rect x="0" y="0" width="12" height="12" fill="#6e7072"/><rect x="1.5" y="4" width="2.3" height="2.3" fill="#3c3f41"/><rect x="4.9" y="4" width="2.3" height="2.3" fill="#3c3f41"/><rect x="8.3" y="4" width="2.3" height="2.3" fill="#3c3f41"/><rect x="1.5" y="7.8" width="2.3" height="2.3" fill="#3c3f41"/><rect x="4.9" y="7.8" width="2.3" height="2.3" fill="#3c3f41"/><rect x="8.3" y="7.8" width="2.3" height="2.3" fill="#3c3f41"/></svg><svg style="left:439px;top:632px" width="12" height="10"><path d="M0 1h3.5M0 5h3M0 9h3.5M6.5 1H12M7 5h5M6.5 9H12M3.5 1L6.5 5L3.5 9" fill="none" stroke="#6e7072" stroke-width="1.7"/></svg><svg style="left:1881px;top:631px" width="15" height="14"><rect x="0" y="0" width="7" height="5" fill="#afb1b3"/><rect x="8" y="0" width="5" height="5" fill="#afb1b3"/><rect x="0" y="6" width="13" height="4" fill="#afb1b3"/><path d="M10 11h5l-2.5 2.5z" fill="#ddd"/></svg><div style="position:absolute;left:51px;top:651px;width:1848px;height:1px;background:#323232"></div><div class="t" style="left:64px;top:666px;color:#bbbbbb;font-size:11.3px">Frames</div><div style="position:absolute;left:417px;top:652px;width:1px;height:337px;background:#323232"></div><div class="t" style="left:431px;top:666px;color:#bbbbbb;font-size:11.4px">Variables</div><div style="position:absolute;left:51px;top:679px;width:1848px;height:1px;background:#323232"></div><div style="position:absolute;left:442px;top:680px;width:1px;height:309px;background:#323232"></div><div class="t" style="left:162px;top:786px;color:#808080">Frames are not available</div><svg style="left:424px;top:686px" width="12" height="12"><path d="M6 0.5v11M0.5 6h11" stroke="#dddddd" stroke-width="1.6"/></svg><div style="position:absolute;left:425px;top:717px;width:10px;height:2px;background:#5a5c5e"></div><svg style="left:424px;top:741px" width="12" height="7"><path d="M0 7L6 0.5L12 7z" fill="#5a5c5e"/></svg><svg style="left:424px;top:767px" width="12" height="7"><path d="M0 0L6 6.5L12 0z" fill="#5a5c5e"/></svg><svg style="left:424px;top:790px" width="12" height="13"><path d="M0.5 3v9.5h9" fill="none" stroke="#5a5c5e"/><rect x="3" y="0.5" width="9" height="10" fill="#5a5c5e"/></svg><div style="position:absolute;left:419px;top:812px;width:22px;height:22px;background:#5c6164;border-radius:3px"></div><svg style="left:421px;top:818px" width="18" height="9"><circle cx="4.5" cy="5" r="3.5" fill="none" stroke="#dddddd" stroke-width="1.6"/><circle cx="13.5" cy="5" r="3.5" fill="none" stroke="#dddddd" stroke-width="1.6"/><path d="M8 4.5h2M1 2.5L0 1M17 2.5L18 1" stroke="#dddddd" stroke-width="1.4"/></svg><svg style="left:469px;top:683px" width="12" height="12"><circle cx="6" cy="6" r="6" fill="#3592c4"/><path d="M6 5v5M6 2.5v1.5" stroke="#fff" stroke-width="1.6"/></svg><div class="t" style="left:486px;top:689px;color:#bbbbbb;letter-spacing:0.124px;">Connected to the target VM, address: '3.tcp.cpolar.top:12718', transport: 'socket'</div><svg style="left:28px;top:631px" width="16" height="16"><path d="M4 13C0 10 1 3 7 3h4" fill="none" stroke="#499c54" stroke-width="2.2"/><path d="M10 0l5 3.5-5 3.5z" fill="#499c54"/><rect x="8" y="8" width="6" height="6" fill="#afb1b3"/></svg><svg style="left:29px;top:656px" width="15" height="15"><path d="M1 14L8 7" stroke="#afb1b3" stroke-width="2.4"/><path d="M6 7C5 3 8 0 12 1L9.5 3.5L11.5 5.5L14 3C15 7 12 10 8 9z" fill="#afb1b3"/></svg><div style="position:absolute;left:26px;top:680px;width:20px;height:1px;background:#4d4f51"></div><div style="position:absolute;left:26px;top:765px;width:20px;height:1px;background:#4d4f51"></div><div style="position:absolute;left:26px;top:824px;width:20px;height:1px;background:#4d4f51"></div><div style="position:absolute;left:26px;top:857px;width:20px;height:1px;background:#4d4f51"></div><div style="position:absolute;left:26px;top:890px;width:20px;height:1px;background:#4d4f51"></div><svg style="left:30px;top:690px" width="13" height="13"><rect x="0" y="0" width="3" height="13" fill="#5a5c5e"/><path d="M5 0L13 6.5L5 13z" fill="#5a5c5e"/></svg><div style="position:absolute;left:32px;top:716px;width:3px;height:12px;background:#afb1b3"></div><div style="position:absolute;left:37px;top:716px;width:3px;height:12px;background:#afb1b3"></div><div style="position:absolute;left:30px;top:743px;width:12px;height:12px;background:#c75450"></div><svg style="left:29px;top:773px" width="15" height="15"><circle cx="5.5" cy="9.5" r="5.3" fill="#db5c5c"/><circle cx="9.5" cy="5.5" r="5.3" fill="#db5c5c" stroke="#3c3f41" stroke-width="1.3"/></svg><svg style="left:29px;top:800px" width="15" height="15"><circle cx="7.5" cy="7.5" r="6" fill="#db5c5c"/><path d="M1 14L14 1" stroke="#3c3f41" stroke-width="3"/><path d="M1.5 13.5L13.5 1.5" stroke="#afb1b3" stroke-width="1.3"/></svg><svg style="left:29px;top:834px" width="15" height="13"><path d="M0 3h4l1.5-2.5h4L11 3h4v10H0z" fill="#afb1b3"/><circle cx="7.5" cy="7.5" r="3" fill="#3c3f41"/><circle cx="7.5" cy="7.5" r="1.6" fill="#afb1b3"/></svg><svg style="left:29px;top:867px" width="14" height="14"><circle cx="7.0" cy="7.0" r="5.18" fill="#afb1b3"/><rect x="5.18" y="0" width="3.64" height="4.20" rx="0.6" fill="#afb1b3" transform="rotate(0 7.0 7.0)"/><rect x="5.18" y="0" width="3.64" height="4.20" rx="0.6" fill="#afb1b3" transform="rotate(60 7.0 7.0)"/><rect x="5.18" y="0" width="3.64" height="4.20" rx="0.6" fill="#afb1b3" transform="rotate(120 7.0 7.0)"/><rect x="5.18" y="0" width="3.64" height="4.20" rx="0.6" fill="#afb1b3" transform="rotate(180 7.0 7.0)"/><rect x="5.18" y="0" width="3.64" height="4.20" rx="0.6" fill="#afb1b3" transform="rotate(240 7.0 7.0)"/><rect x="5.18" y="0" width="3.64" height="4.20" rx="0.6" fill="#afb1b3" transform="rotate(300 7.0 7.0)"/><circle cx="7.0" cy="7.0" r="2.10" fill="#3c3f41"/></svg><svg style="left:39px;top:879px" width="6" height="4"><path d="M0 0h6L3 3.5z" fill="#dddddd"/></svg><svg style="left:28px;top:899px" width="16" height="16"><path d="M1 15L7 9" stroke="#afb1b3" stroke-width="1.6"/><path d="M9 1L15 7L12 8L8 12L7.5 9.5L4 8.5z" fill="#afb1b3"/></svg><div style="position:absolute;left:0px;top:989px;width:1917px;height:2px;background:#2b2b2b"></div><div style="position:absolute;left:232px;top:989px;width:72px;height:2px;background:#1f1f1f"></div><div style="position:absolute;left:514px;top:432px;width:44px;height:35px;border:3px solid #ed1c24"></div><svg style="left:0;top:0" width="1917" height="991"><path d="M542 474L562 486.5L556 488.5L632.8 617L631.6 617.4L548.5 493L544 497.5z" fill="#ed1c24"/></svg><div style="position:absolute;left:632px;top:624px;font-size:18px;line-height:24px;color:#ed1c24;white-space:pre">给该行代码上断点调试</div><div style="position:absolute;white-space:pre;color:#c8c8c8;text-shadow:1px 1px 1px #222;left:1584px;top:935px;font-size:35.5px;line-height:44px;letter-spacing:-1.6px">CSDN</div><div style="position:absolute;white-space:pre;color:#c8c8c8;text-shadow:1px 1px 1px #222;left:1692px;top:938px;font-size:31px;line-height:44px">@</div><div style="position:absolute;white-space:pre;color:#c8c8c8;text-shadow:1px 1px 1px #222;left:1723px;top:937px;font-size:38px;line-height:44px">热爱技术。</div></body></html>
